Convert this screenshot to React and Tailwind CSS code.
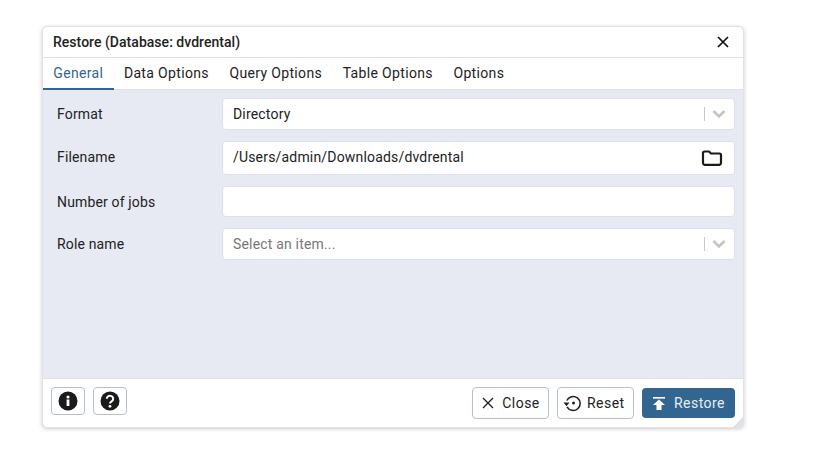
import React from 'react'

function Chevron() {
  return (
    <div className='flex items-center'>
      <div className='w-px h-[14px] bg-[#c8c8c8]'></div>
      <svg width='29' height='20' viewBox='0 0 29 20'>
        <path d='M8.5 7 L14 12.5 L19.5 7' fill='none' stroke='#c4c4c4' strokeWidth='2.6' />
      </svg>
    </div>
  )
}

function Row({ label, className, labelClass, children }) {
  return (
    <div className={'flex items-center ' + className}>
      <div className={'w-[179px] shrink-0 pl-[14px] text-[14px] tracking-[0.15px] text-[#222] ' + labelClass}>{label}</div>
      <div className='flex-1'>{children}</div>
    </div>
  )
}

function Field({ height, children }) {
  return (
    <div className={'flex items-center justify-between bg-white border border-[#dde0e6] rounded-[4px] pl-[10px] text-[14px] tracking-[0.18px] ' + height}>
      {children}
    </div>
  )
}

export default function App() {
  const tabs = ['General', 'Data Options', 'Query Options', 'Table Options', 'Options']

  return (
    <div className='w-[818px] h-[451px] bg-white pl-[42px] pt-[26px] font-[Roboto,sans-serif] text-[#222]'>
      <div className='w-[702px] h-[402px] flex flex-col bg-white border border-[#e2e2e2] rounded-[5px] shadow-[0_1px_4px_rgba(0,0,0,0.2)] overflow-hidden relative'>
        <div className='h-[30px] flex items-center justify-between pl-[10px] pr-[11px] border-b border-[#dde0e6] box-content'>
          <span className='text-[14px] font-medium tracking-[0.03px] text-[#222]'>Restore (Database: dvdrental)</span>
          <svg width='14' height='14' viewBox='0 0 14 14' className='mr-[2px]'>
            <path d='M2 2 L12 12 M12 2 L2 12' stroke='#111' strokeWidth='1.7' fill='none' />
          </svg>
        </div>

        <div className='h-[32px] flex border-b border-[#dde0e6] text-[14px] tracking-[0.34px]'>
          {tabs.map((t, i) => (
            <div
              key={t}
              className={i === 0
                ? 'h-[32px] px-[10.3px] flex items-center text-[#326690] border-b-2 border-[#326690]'
                : 'h-[31px] px-[10.3px] flex items-center text-[#222]'}
            >
              {t}
            </div>
          ))}
        </div>

        <div className='flex-1 bg-[#e7eaf3] pt-[8px] pr-[8px]'>
          <Row label='Format'>
            <Field height='h-[32px]'>
              <span>Directory</span>
              <Chevron />
            </Field>
          </Row>
          <Row label='Filename' labelClass='pb-[2px]' className='mt-[11px]'>
            <Field height='h-[34px]'>
              <span className='pb-[2px]'>/Users/admin/Downloads/dvdrental</span>
              <svg width='22' height='18' viewBox='0 0 22 18' className='mr-[11px]'>
                <path d='M2 4 a1.5 1.5 0 0 1 1.5 -1.5 H8 L10 4.5 H18.5 a1.5 1.5 0 0 1 1.5 1.5 V14 a1.8 1.8 0 0 1 -1.8 1.8 H3.8 a1.8 1.8 0 0 1 -1.8 -1.8 Z' fill='none' stroke='#1a1a1a' strokeWidth='2.2' />
              </svg>
            </Field>
          </Row>
          <Row label='Number of jobs' labelClass='pt-[2px]' className='mt-[11px]'>
            <Field height='h-[31px]' />
          </Row>
          <Row label='Role name' className='mt-[11px]'>
            <Field height='h-[32px]'>
              <span className='text-[#777]'>Select an item...</span>
              <Chevron />
            </Field>
          </Row>
        </div>

        <div className='h-[49px] flex items-start justify-between border-t border-[#dde0e6] pl-[8px] pr-[8px] pt-[8px]'>
          <div className='flex gap-[8px]'>
            <button className='w-[34px] h-[28px] flex items-center justify-center border border-[#b5bfd0] rounded-[4px]'>
              <svg width='20' height='20' viewBox='0 0 20 20'>
                <circle cx='10' cy='10' r='9.5' fill='#1a1a1a' />
                <rect x='8.6' y='8.5' width='2.8' height='6.5' fill='#fff' />
                <circle cx='10' cy='6' r='1.6' fill='#fff' />
              </svg>
            </button>
            <button className='w-[34px] h-[28px] flex items-center justify-center border border-[#b5bfd0] rounded-[4px]'>
              <svg width='20' height='20' viewBox='0 0 20 20'>
                <circle cx='10' cy='10' r='9.5' fill='#1a1a1a' />
                <path d='M6.8 7.8 a3.2 3 0 1 1 4.8 2.6 c-1 .6 -1.6 1 -1.6 2.2' fill='none' stroke='#fff' strokeWidth='2' />
                <circle cx='10' cy='15.3' r='1.4' fill='#fff' />
              </svg>
            </button>
          </div>
          <div className='flex items-start gap-[8px] text-[14px] tracking-[0.45px]'>
            <button className='w-[77px] h-[32px] flex items-center justify-center gap-[7px] border border-[#b5bfd0] rounded-[4px]'>
              <svg width='14' height='14' viewBox='0 0 14 14'>
                <path d='M2 2 L12 12 M12 2 L2 12' stroke='#222' strokeWidth='1.4' fill='none' />
              </svg>
              Close
            </button>
            <button className='w-[77px] h-[32px] flex items-center justify-start pl-[5px] gap-[4px] border border-[#b5bfd0] rounded-[4px]'>
              <svg width='20' height='20' viewBox='0 0 20 20'>
                <path d='M3.8 7.5 A7 7 0 1 1 4 13.8' fill='none' stroke='#222' strokeWidth='1.6' />
                <path d='M0.5 9.5 L6.5 9.5 L3.5 13.2 Z' fill='#222' />
                <circle cx='10.5' cy='10' r='1.5' fill='#222' />
              </svg>
              Reset
            </button>
            <button className='w-[93px] h-[30px] mt-[1px] flex items-center justify-center gap-[8px] bg-[#326690] text-[#e8edf3] rounded-[4px]'>
              <svg width='14' height='14' viewBox='0 0 14 14'>
                <rect x='1' y='1' width='12' height='1.6' fill='#fff' />
                <path d='M7 3.5 L13 9 H9.5 V14 H4.5 V9 H1 Z' fill='#fff' />
              </svg>
              Restore
            </button>
          </div>
        </div>

        <div className='absolute right-0 bottom-0 w-0 h-0 border-l-[10px] border-l-transparent border-b-[10px] border-b-[#dfe1e6]'></div>
      </div>
    </div>
  )
}
